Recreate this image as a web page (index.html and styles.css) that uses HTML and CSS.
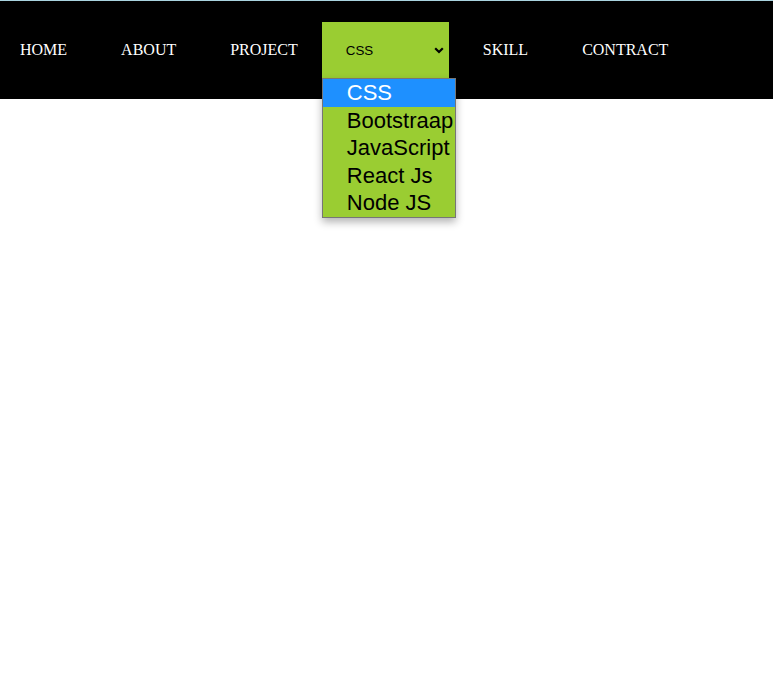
FILE: index.html
```html
<!DOCTYPE html>
<html>
<head>
<meta charset="utf-8">
<link rel="stylesheet" href="styles.css">
</head>
<body>
<div class="page">
<nav class="nav">
  <ul class="menu">
    <li class="item"><a href="#">HOME</a></li>
    <li class="item"><a href="#">ABOUT</a></li>
    <li class="item item-before-select"><a href="#">PROJECT</a></li>
    <li class="item item-select">
      <div class="select">
        <span class="select-value">CSS</span>
        <svg class="chevron" width="10" height="7" viewBox="0 0 10 7"><path d="M1.2 1.2 L5 5 L8.8 1.2" fill="none" stroke="#000" stroke-width="2.2"/></svg>
      </div>
      <ul class="options">
        <li class="option selected">CSS</li>
        <li class="option">Bootstraap</li>
        <li class="option">JavaScript</li>
        <li class="option">React Js</li>
        <li class="option">Node JS</li>
      </ul>
    </li>
    <li class="item"><a href="#">SKILL</a></li>
    <li class="item"><a href="#">CONTRACT</a></li>
  </ul>
</nav>
</div>
</body>
</html>
```
FILE: styles.css
```css
html, body {
  margin: 0;
  padding: 0;
  background: #fff;
}
.page {
  min-height: 692px;
  border-top: 1px solid #a9d3df;
  font-family: "Liberation Serif", "Times New Roman", serif;
}
.nav {
  background: #000;
  height: 98px;
  position: relative;
  z-index: 1;
}
.menu {
  list-style: none;
  margin: 0;
  padding: 0 0 0 20px;
  height: 100%;
  display: flex;
  align-items: center;
}
.item {
  margin-right: 54px;
  position: relative;
}
.item a {
  color: #fff;
  text-decoration: none;
  font-size: 16px;
}
.item-before-select {
  margin-right: 24px;
}
.item-select {
  margin-right: 34px;
}
.select {
  width: 127px;
  height: 56px;
  box-sizing: border-box;
  background: #9acd32;
  display: flex;
  align-items: center;
  justify-content: space-between;
  padding: 0 5px 0 24px;
  font-family: "Liberation Sans", Arial, sans-serif;
  font-size: 13.33px;
  color: #000;
}
.chevron {
  margin-top: 1px;
}
.options {
  position: absolute;
  left: 0;
  top: 56px;
  width: 134px;
  box-sizing: border-box;
  margin: 0;
  padding: 0;
  list-style: none;
  background: #9acd32;
  border: 1px solid #767676;
  box-shadow: 0 4px 8px rgba(0, 0, 0, 0.3);
  font-family: "Liberation Sans", Arial, sans-serif;
  font-size: 22px;
  z-index: 2;
}
.option {
  height: 27.6px;
  line-height: 27.6px;
  padding-left: 24px;
  color: #000;
  white-space: nowrap;
}
.option.selected {
  background: #1e90ff;
  color: #fff;
}
```
